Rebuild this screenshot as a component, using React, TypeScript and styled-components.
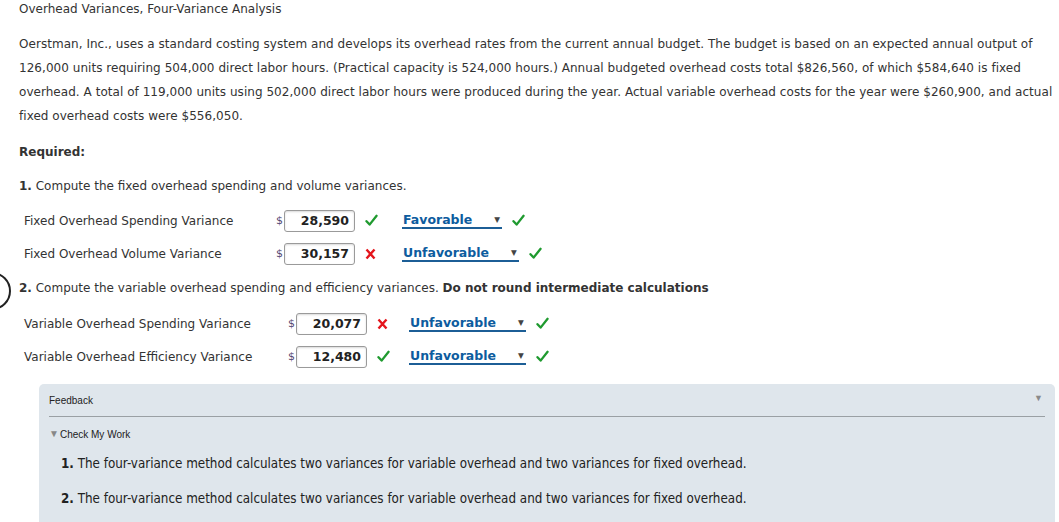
import styled, { createGlobalStyle } from "styled-components";

const GlobalStyle = createGlobalStyle`
  body {
    margin: 0;
    background: #fff;
    font-family: "DejaVu Sans", Verdana, sans-serif;
    color: #333;
  }
`;

const Page = styled.div`
  position: relative;
  width: 1059px;
  height: 522px;
  overflow: hidden;
  padding-left: 19px;
  box-sizing: border-box;
  font-size: 12px;
`;

const Title = styled.div`
  line-height: 19px;
  color: #333;
`;

const Paragraph = styled.p`
  margin: 13px 0 0;
  line-height: 24px;
  color: #333;
  letter-spacing: 0.04px;
`;

const Required = styled.div`
  margin-top: 12px;
  line-height: 24px;
  font-weight: bold;
`;

const Step = styled.div<{ $top: number }>`
  margin-top: ${(p) => p.$top}px;
  line-height: 24px;
  b {
    font-weight: bold;
  }
`;

const Rows = styled.div<{ $top: number }>`
  margin-top: ${(p) => p.$top}px;
  padding-left: 5px;
`;

const Row = styled.div<{ $label: number; $gap: number }>`
  display: grid;
  grid-template-columns: ${(p) => p.$label}px auto ${(p) => p.$gap}px auto auto;
  align-items: center;
  justify-content: start;
  height: 33px;
`;

const Label = styled.span`
  color: #333;
`;

const Money = styled.span`
  display: flex;
  align-items: center;
  color: #554a73;
  font-size: 11px;
`;

const Input = styled.span`
  display: inline-block;
  width: 71px;
  height: 22px;
  box-sizing: border-box;
  margin-left: 1px;
  border: 1px solid #9a9a9a;
  border-radius: 3px;
  box-shadow: inset 0 1px 2px rgba(0, 0, 0, 0.15);
  text-align: right;
  padding-right: 5px;
  line-height: 20px;
  font-weight: bold;
  font-size: 12.5px;
  color: #222;
`;

const MarkIcon = styled.svg`
  display: block;
  margin-left: 10px;
`;

const Select = styled.span`
  display: inline-flex;
  align-items: center;
  justify-content: space-between;
  gap: 22px;
  border-bottom: 2px solid #1c5e96;
  color: #0d5c9e;
  font-weight: bold;
  font-size: 12.5px;
  line-height: 15px;
  padding: 0 1px;
`;

const Caret = styled.span`
  font-size: 7.5px;
  color: #444;
  margin-right: 1px;
`;

const Arc = styled.svg`
  position: absolute;
  left: 0;
  top: 271px;
`;

const FeedbackBox = styled.div`
  margin: 11px 4px 0 20px;
  background: #dfe6ec;
  border-radius: 5px 5px 0 0;
  padding: 0 10px;
  height: 160px;
  font-family: "Liberation Sans", Arial, sans-serif;
`;

const FeedbackHead = styled.div`
  display: flex;
  justify-content: space-between;
  align-items: center;
  height: 31px;
  padding-top: 1px;
  border-bottom: 1px solid #9aa0a4;
  font-size: 10px;
  color: #222;
`;

const HeadCaret = styled.span`
  font-size: 9px;
  color: #8a8a8a;
  margin-right: 2px;
  margin-top: -6px;
`;

const CheckWork = styled.div`
  margin-top: 11px;
  display: flex;
  align-items: center;
  gap: 1px;
  font-size: 10px;
  color: #222;
  line-height: 14px;
`;

const SmallCaret = styled.span`
  font-size: 10px;
  color: #888;
  margin-top: -3px;
`;

const Items = styled.div`
  padding-left: 12px;
  margin-top: 12px;
  font-family: "DejaVu Sans Condensed", "DejaVu Sans", sans-serif;
  font-stretch: condensed;
  font-size: 13.3px;
  color: #222;
`;

const Item = styled.div`
  line-height: 20px;
  margin-bottom: 15px;
`;

type Answer = { label: string; value: string; ok: boolean; choice: string };

const part1: Answer[] = [
  { label: "Fixed Overhead Spending Variance", value: "28,590", ok: true, choice: "Favorable" },
  { label: "Fixed Overhead Volume Variance", value: "30,157", ok: false, choice: "Unfavorable" },
];

const part2: Answer[] = [
  { label: "Variable Overhead Spending Variance", value: "20,077", ok: false, choice: "Unfavorable" },
  { label: "Variable Overhead Efficiency Variance", value: "12,480", ok: true, choice: "Unfavorable" },
];

const Check = () => (
  <MarkIcon width="13" height="13" viewBox="0 0 13 13">
    <path d="M1.5 7.2 L4.6 10.6 L11.6 1.8" fill="none" stroke="#1f9a2f" strokeWidth="2.3" strokeLinecap="round" strokeLinejoin="round" />
  </MarkIcon>
);

const Cross = () => (
  <MarkIcon width="11" height="12" viewBox="0 0 11 12">
    <path d="M1.5 1.5 L9.5 10.5 M9.5 1.5 L1.5 10.5" fill="none" stroke="#e4151c" strokeWidth="2.4" strokeLinecap="butt" />
  </MarkIcon>
);

const AnswerRows = ({ rows, label, gap, top }: { rows: Answer[]; label: number; gap: number; top: number }) => (
  <Rows $top={top}>
    {rows.map((r) => (
      <Row key={r.label} $label={label} $gap={gap}>
        <Label>{r.label}</Label>
        <Money>
          $<Input>{r.value}</Input>
        </Money>
        <span>{r.ok ? <Check /> : <Cross />}</span>
        <Select>
          {r.choice}
          <Caret>▼</Caret>
        </Select>
        <Check />
      </Row>
    ))}
  </Rows>
);

export default function App() {
  return (
    <>
      <GlobalStyle />
      <Page>
        <Title>Overhead Variances, Four-Variance Analysis</Title>
        <Paragraph>
          Oerstman, Inc., uses a standard costing system and develops its overhead rates from the current annual
          budget. The budget is based on an expected annual output of 126,000 units requiring 504,000 direct labor
          hours. (Practical capacity is 524,000 hours.) Annual budgeted overhead costs total $826,560, of which
          $584,640 is fixed overhead. A total of 119,000 units using 502,000 direct labor hours were produced during
          the year. Actual variable overhead costs for the year were $260,900, and actual fixed overhead costs were
          $556,050.
        </Paragraph>
        <Required>Required:</Required>
        <Step $top={10}>
          <b>1.</b> Compute the fixed overhead spending and volume variances.
        </Step>
        <AnswerRows rows={part1} label={252} gap={47} top={6} />
        <Step $top={6}>
          <b>2.</b> Compute the variable overhead spending and efficiency variances.{" "}
          <b>Do not round intermediate calculations</b>
        </Step>
        <AnswerRows rows={part2} label={264} gap={42} top={7} />
        <Arc width="12" height="42" viewBox="0 0 12 42">
          <circle cx="-8" cy="20" r="18" fill="none" stroke="#222" strokeWidth="2" />
        </Arc>
        <FeedbackBox>
          <FeedbackHead>
            <span>Feedback</span>
            <HeadCaret>▼</HeadCaret>
          </FeedbackHead>
          <CheckWork>
            <SmallCaret>▼</SmallCaret>
            Check My Work
          </CheckWork>
          <Items>
            <Item>
              <b>1.</b> The four-variance method calculates two variances for variable overhead and two variances for
              fixed overhead.
            </Item>
            <Item>
              <b>2.</b> The four-variance method calculates two variances for variable overhead and two variances for
              fixed overhead.
            </Item>
          </Items>
        </FeedbackBox>
      </Page>
    </>
  );
}
